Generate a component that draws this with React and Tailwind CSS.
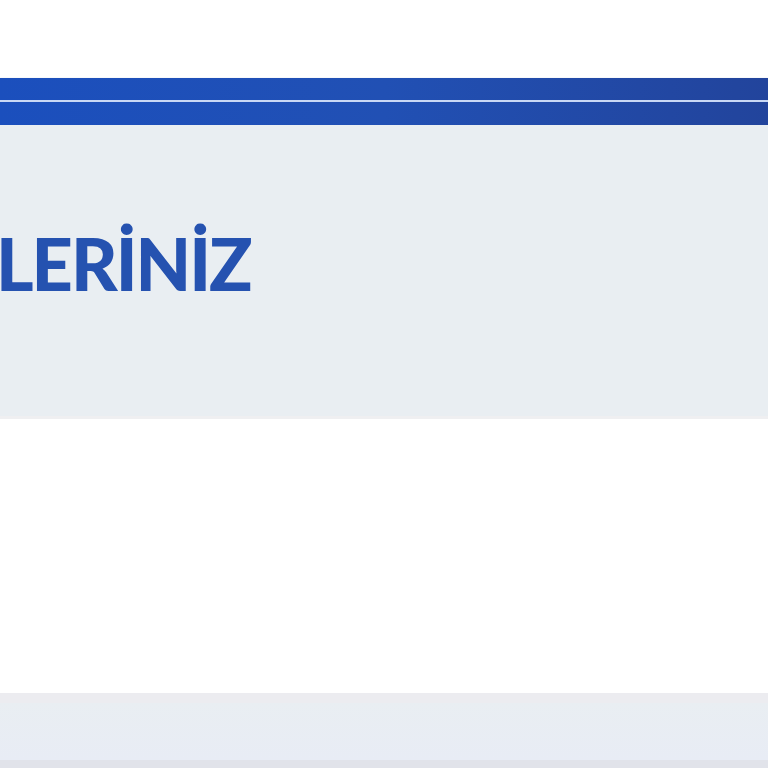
export default function App() {
  return (
    <div className="w-[768px] h-[768px] overflow-hidden bg-white flex flex-col">
      {/* top white gap */}
      <div className="h-[78px] shrink-0 bg-white" />

      {/* blue band with thin light line */}
      <div className="h-[47px] shrink-0 flex flex-col bg-gradient-to-r from-[#1b4fbd] via-[#2150b4] to-[#22449c] shadow-[0_1px_2px_rgba(30,60,120,0.4)]">
        <div className="h-[22px]" />
        <div className="h-[2px] bg-[#c9d8f5]" />
        <div className="flex-1" />
      </div>

      {/* heading panel */}
      <div className="h-[294px] shrink-0 bg-[#e9eef2] flex items-center overflow-hidden border-b-[3px] border-[#efeff1]">
        <h1
          className="ml-[-4px] text-[#2552b0] text-[72px] font-black leading-none tracking-[-2px] whitespace-nowrap pb-[16px]"
          style={{ fontFamily: "Lato, 'Open Sans', sans-serif" }}
        >
          LERİNİZ
        </h1>
      </div>

      {/* white body */}
      <div className="flex-1 bg-white" />

      {/* bottom gray strip */}
      <div className="h-[75px] shrink-0 flex flex-col bg-[#e9eef2]">
        <div className="h-[10px] bg-[#ececf0]" />
        <div className="flex-1 bg-gradient-to-b from-[#e9eef2] to-[#e8ecf5]" />
        <div className="h-[8px] bg-[#e1e3ea]" />
      </div>
    </div>
  );
}
